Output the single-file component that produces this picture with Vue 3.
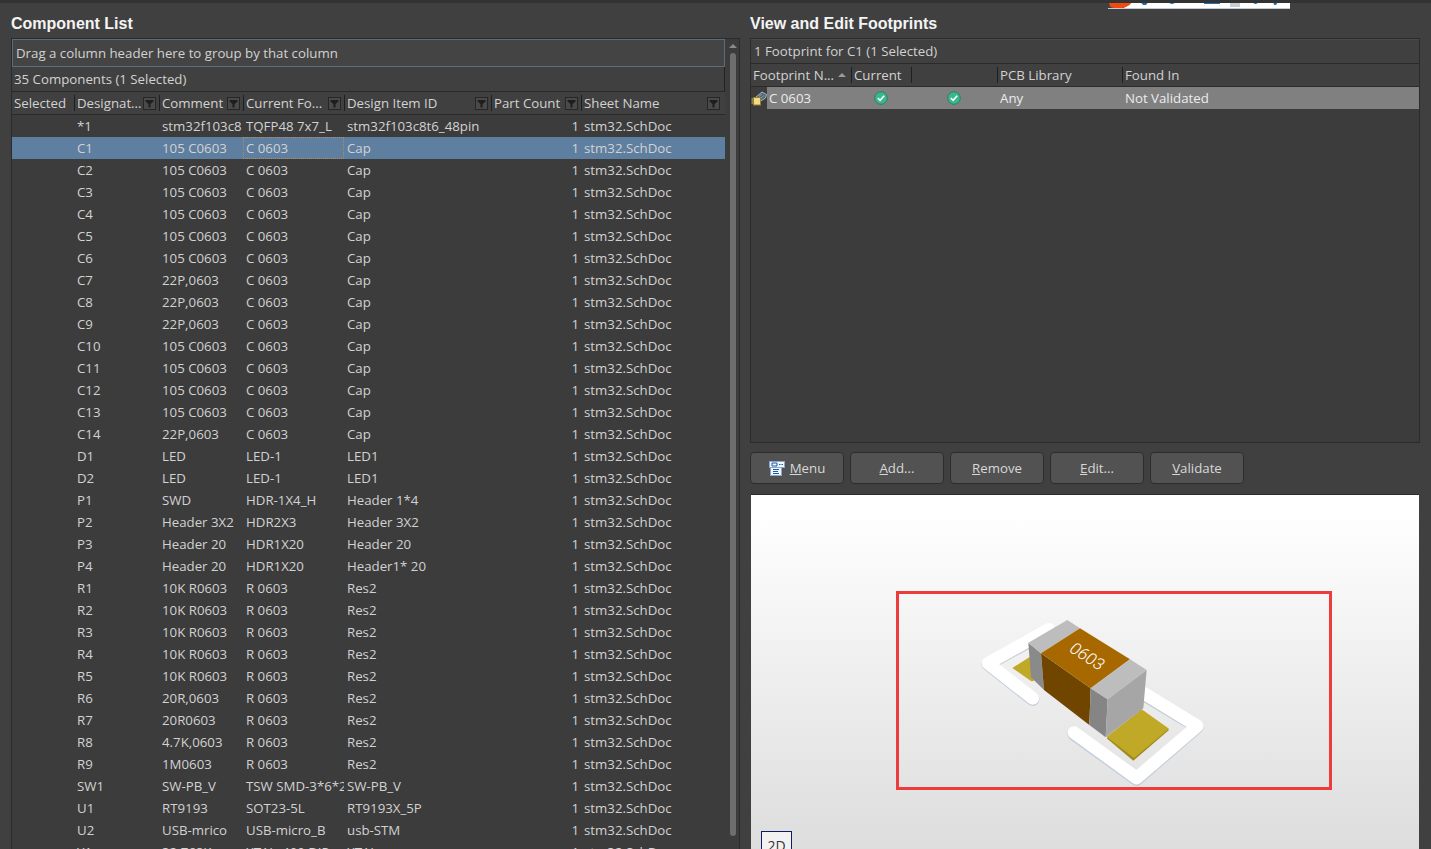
<script setup>
const columns = [
  { label: 'Selected' },
  { label: 'Designat...', filter: true },
  { label: 'Comment', filter: true },
  { label: 'Current Fo...', filter: true },
  { label: 'Design Item ID', filter: true },
  { label: 'Part Count', filter: true },
  { label: 'Sheet Name', filter: true },
]

const parts = [
  ['*1', 'stm32f103c8', 'TQFP48 7x7_L', 'stm32f103c8t6_48pin'],
  ['C1', '105 C0603', 'C 0603', 'Cap'],
  ['C2', '105 C0603', 'C 0603', 'Cap'],
  ['C3', '105 C0603', 'C 0603', 'Cap'],
  ['C4', '105 C0603', 'C 0603', 'Cap'],
  ['C5', '105 C0603', 'C 0603', 'Cap'],
  ['C6', '105 C0603', 'C 0603', 'Cap'],
  ['C7', '22P,0603', 'C 0603', 'Cap'],
  ['C8', '22P,0603', 'C 0603', 'Cap'],
  ['C9', '22P,0603', 'C 0603', 'Cap'],
  ['C10', '105 C0603', 'C 0603', 'Cap'],
  ['C11', '105 C0603', 'C 0603', 'Cap'],
  ['C12', '105 C0603', 'C 0603', 'Cap'],
  ['C13', '105 C0603', 'C 0603', 'Cap'],
  ['C14', '22P,0603', 'C 0603', 'Cap'],
  ['D1', 'LED', 'LED-1', 'LED1'],
  ['D2', 'LED', 'LED-1', 'LED1'],
  ['P1', 'SWD', 'HDR-1X4_H', 'Header 1*4'],
  ['P2', 'Header 3X2', 'HDR2X3', 'Header 3X2'],
  ['P3', 'Header 20', 'HDR1X20', 'Header 20'],
  ['P4', 'Header 20', 'HDR1X20', 'Header1* 20'],
  ['R1', '10K R0603', 'R 0603', 'Res2'],
  ['R2', '10K R0603', 'R 0603', 'Res2'],
  ['R3', '10K R0603', 'R 0603', 'Res2'],
  ['R4', '10K R0603', 'R 0603', 'Res2'],
  ['R5', '10K R0603', 'R 0603', 'Res2'],
  ['R6', '20R,0603', 'R 0603', 'Res2'],
  ['R7', '20R0603', 'R 0603', 'Res2'],
  ['R8', '4.7K,0603', 'R 0603', 'Res2'],
  ['R9', '1M0603', 'R 0603', 'Res2'],
  ['SW1', 'SW-PB_V', 'TSW SMD-3*6*2', 'SW-PB_V'],
  ['U1', 'RT9193', 'SOT23-5L', 'RT9193X_5P'],
  ['U2', 'USB-mrico', 'USB-micro_B', 'usb-STM'],
  ['Y1', '32.768K', 'XTAL_400 DIP', 'XTAL'],
]

const buttons = [
  { key: 'M', rest: 'enu', icon: true },
  { key: 'A', rest: 'dd...' },
  { key: 'R', rest: 'emove' },
  { key: 'E', rest: 'dit...' },
  { key: 'V', rest: 'alidate' },
]
</script>

<template>
  <div class="page">
    <div class="tray">
      <svg width="182" height="8" viewBox="0 0 182 8">
        <path d="M0 0 L2 6 Q3 8 8 8 L14 8 Q22 7 25 0 L19 0 Q15 3 9 3 Q6 3 6 0 Z" fill="#f04a12" />
        <path d="M31 0h3l2 3 3-3h3l-4 5h-3zM60 0h8q-1 4-4 4t-4-4zM83 0h3v2h-3zM96 0h16v4H96z" fill="#1c6fc4" />
        <path d="M122 0h10v7h-10z" fill="#c8cdd3" />
        <path d="M144 0h7q-1 4-3.500 4T144 0zM165 0h6l-3 5h-2z" fill="#1c6fc4" />
      </svg>
    </div>

    <section class="left">
      <h2>Component List</h2>
      <div class="list-box">
        <div class="list-main">
          <div class="group-bar">Drag a column header here to group by that column</div>
          <div class="count-row">35 Components (1 Selected)</div>
          <div class="grid-row head-row">
            <div v-for="col in columns" :key="col.label" class="head-cell">
              <span class="head-label">{{ col.label }}</span>
              <svg v-if="col.filter" class="filter" width="13" height="13" viewBox="0 0 13 13">
                <rect x="0.5" y="0.5" width="12" height="12" fill="#4a4a4a" stroke="#262626" />
                <path d="M2.500 3h8v1.500L7.500 7v3.500h-2V7L2.500 4.500z" fill="#1e1e1e" />
              </svg>
            </div>
          </div>
          <div class="rows">
            <div
              v-for="row in parts"
              :key="row[0]"
              class="grid-row body-row"
              :class="{ selected: row[0] === 'C1' }"
            >
              <div class="cell"></div>
              <div class="cell">{{ row[0] }}</div>
              <div class="cell">{{ row[1] }}</div>
              <div class="cell foot-cell">{{ row[2] }}</div>
              <div class="cell">{{ row[3] }}</div>
              <div class="cell count-cell">1</div>
              <div class="cell">stm32.SchDoc</div>
            </div>
          </div>
        </div>
        <div class="scrollbar">
          <div class="arrow"></div>
          <div class="thumb"></div>
        </div>
      </div>
    </section>

    <section class="right">
      <h2>View and Edit Footprints</h2>
      <div class="foot-box">
        <div class="foot-title">1 Footprint for C1 (1 Selected)</div>
        <div class="foot-grid foot-head">
          <div class="foot-h first">Footprint N...<span class="sort"></span></div>
          <div class="foot-h">Current</div>
          <div class="foot-h"></div>
          <div class="foot-h">PCB Library</div>
          <div class="foot-h">Found In</div>
        </div>
        <div class="foot-grid foot-row">
          <div class="name-cell">
            <svg class="chip" width="16" height="16" viewBox="0 0 16 16">
              <path d="M5 7L11 2L15.500 4.500L14.500 8L9 11.500L5 9z" fill="#4f6678" stroke="#c4d0da" stroke-width="0.8" />
              <path d="M8 6.500L11 4M10 8L13 5.500" stroke="#9fb2c2" stroke-width="0.7" />
              <path d="M0.500 9h2M0.500 11h2M0.500 13h2" stroke="#e2c766" />
              <rect x="2.500" y="7.500" width="7" height="7.500" fill="#f0dc86" stroke="#96802e" />
            </svg>
            <span class="name-text">C 0603</span>
          </div>
          <div class="check-cell">
            <svg width="14" height="14" viewBox="0 0 14 14">
              <circle cx="7" cy="7" r="6.300" fill="#38b98c" stroke="#2b7f62" />
              <path d="M3.800 7l2.300 2.400 4.100-4.600" fill="none" stroke="#fff" stroke-width="1.600" />
            </svg>
          </div>
          <div class="check-cell">
            <svg width="14" height="14" viewBox="0 0 14 14">
              <circle cx="7" cy="7" r="6.300" fill="#38b98c" stroke="#2b7f62" />
              <path d="M3.800 7l2.300 2.400 4.100-4.600" fill="none" stroke="#fff" stroke-width="1.600" />
            </svg>
          </div>
          <div class="text-cell">Any</div>
          <div class="text-cell">Not Validated</div>
        </div>
      </div>

      <div class="buttons">
        <button v-for="b in buttons" :key="b.key" type="button">
          <svg v-if="b.icon" width="16" height="15" viewBox="0 0 16 15">
            <rect x="1.500" y="5.500" width="11" height="9" fill="#f2f6fb" stroke="#86a8d2" />
            <rect x="0.500" y="0.500" width="15" height="6" fill="#f2f6fb" stroke="#86a8d2" />
            <path d="M3 2h5v3H3z" fill="none" stroke="#1f5aa0" />
            <path d="M10 3h1.500v1H10zM12.500 3H14v1h-1.500z" fill="#1f5aa0" />
            <path d="M4 8h6v1H4zM4 10h5v1H4zM4 12h6v1H4z" fill="#1f5aa0" />
          </svg>
          <span><u>{{ b.key }}</u>{{ b.rest }}</span>
        </button>
      </div>

      <div class="preview">
        <svg class="model" width="260" height="200" viewBox="0 0 780 600">
          <g fill="none" stroke-linecap="round" stroke-linejoin="round">
            <path d="M266 92L84 192L218 298" stroke="#c3cfdc" stroke-width="40" />
            <path d="M266 88L84 190L218 295" stroke="#fff" stroke-width="38" />
            <path d="M552 284L712 380L530 538L342 402" stroke="#c3cfdc" stroke-width="40" />
            <path d="M552 280L712 378L530 534L342 398" stroke="#fff" stroke-width="38" />
          </g>
          <path d="M157 204L210 170L222 242L214 244Z" fill="#c1a928" />
          <path d="M440 415L545 330L627 390L520 482Z" fill="#a08b20" />
          <path d="M440 410L545 328L627 386L522 474Z" fill="#c1a928" />
          <path d="M205 128L243 160L252 270L213 232Z" fill="#8a8a8a" />
          <path d="M205 128L322 60L360 85L243 160Z" fill="#bdbdbd" />
          <path d="M243 160L392 265L388 375L252 270Z" fill="#6f4500" />
          <path d="M243 160L360 85L510 178L392 265Z" fill="#a86800" />
          <path d="M392 265L443 298L437 412L388 375Z" fill="#858585" />
          <path d="M392 265L510 178L560 210L443 298Z" fill="#bdbdbd" />
          <path d="M443 298L560 210L550 325L437 412Z" fill="#a6a6a6" />
          <text class="print" x="0" y="0" transform="translate(324 152) rotate(33) skewX(-8)">0603</text>
        </svg>
        <div class="marker"></div>
        <div class="view-2d">2D</div>
      </div>
    </section>
  </div>
</template>

<style>
html,
body {
  height: 849px;
  margin: 0;
  overflow: hidden;
  background: #404040;
}
</style>

<style scoped>
.page {
  position: relative;
  display: flex;
  gap: 10px;
  box-sizing: border-box;
  height: 849px;
  padding-left: 11px;
  overflow: hidden;
  color: #d2d2d2;
  font-family: "Open Sans", "Noto Sans", sans-serif;
  font-size: 13.25px;
  background: #404040;
  border-top: 3px solid #333;
}

.tray {
  position: absolute;
  top: -3px;
  left: 1108px;
  width: 182px;
  height: 8px;
  line-height: 0;
  background: linear-gradient(to right, transparent 16px, #fff 16px);
  border-bottom: 1px solid #c3ccd6;
}

h2 {
  height: 35px;
  margin: 0;
  padding-top: 11px;
  box-sizing: border-box;
  color: #f4f4f4;
  font-family: "Liberation Sans", Arial, sans-serif;
  font-size: 16px;
  font-weight: 700;
  line-height: 19px;
}

.left {
  width: 729px;
  flex: none;
}

.list-box {
  display: flex;
  box-sizing: border-box;
  height: 820px;
  background: #3c3c3c;
  border: 1px solid #2b2b2b;
  border-bottom: 0;
}

.list-main {
  width: 713px;
  flex: none;
}

.group-bar {
  box-sizing: border-box;
  height: 28px;
  padding-left: 3px;
  line-height: 26px;
  background: #444;
  border: 1px solid #5b6b80;
}

.count-row {
  box-sizing: border-box;
  height: 24px;
  padding-left: 2px;
  line-height: 24px;
  background: #404040;
  border-right: 1px solid #222;
  background-clip: padding-box;
}

.grid-row {
  display: grid;
  grid-template-columns: 62px 85px 84px 101px 147px 90px 144px;
}

.head-row {
  box-sizing: border-box;
  height: 24px;
  background: #404040;
  border-top: 1px solid #2a2a2a;
  border-bottom: 1px solid #2a2a2a;
}

.head-cell {
  display: flex;
  align-items: center;
  justify-content: space-between;
  box-sizing: border-box;
  height: 16px;
  margin-top: 3px;
  padding: 0 3px 0 2px;
  border-left: 1px solid #1f1f1f;
}

.head-cell:first-child {
  padding-left: 2px;
  border-left: 0;
}

.head-cell:last-child {
  padding-right: 5px;
}

.head-label {
  white-space: nowrap;
}

.filter {
  flex: none;
}

.body-row {
  height: 22px;
  line-height: 22px;
}

.body-row.selected {
  background: #5f7fa0;
}

.cell {
  box-sizing: border-box;
  padding-left: 3px;
  overflow: hidden;
  white-space: nowrap;
}

.body-row.selected .foot-cell {
  outline: 1px dotted #b08c60;
  outline-offset: -1px;
}

.count-cell {
  padding-right: 2px;
  text-align: right;
}

.scrollbar {
  display: flex;
  flex-direction: column;
  align-items: center;
  width: 14px;
  margin-left: 1px;
  padding-top: 5px;
}

.arrow {
  width: 0;
  height: 0;
  border-right: 4px solid transparent;
  border-bottom: 4px solid #8b8b8b;
  border-left: 4px solid transparent;
}

.thumb {
  width: 6px;
  height: 783px;
  margin-top: 5px;
  background: #6e6e6e;
  border-radius: 3px;
}

.right {
  width: 670px;
  flex: none;
}

.foot-box {
  box-sizing: border-box;
  height: 405px;
  background: #3c3c3c;
  border: 1px solid #2b2b2b;
}

.foot-title {
  box-sizing: border-box;
  height: 24px;
  padding-left: 3px;
  line-height: 23px;
  background: #404040;
  border-top: 1px solid #4a4a4a;
}

.foot-grid {
  display: grid;
  grid-template-columns: 100px 60px 86px 125px 297px;
}

.foot-head {
  box-sizing: border-box;
  height: 24px;
  background: #404040;
  border-top: 1px solid #2a2a2a;
  border-bottom: 1px solid #2a2a2a;
}

.foot-h {
  display: flex;
  align-items: center;
  justify-content: space-between;
  box-sizing: border-box;
  height: 16px;
  margin-top: 3px;
  padding: 0 2px;
  border-left: 1px solid #1f1f1f;
}

.foot-h.first {
  padding: 0 5px 0 2px;
  border-left: 0;
}

.sort {
  width: 0;
  height: 0;
  border-right: 4px solid transparent;
  border-bottom: 4px solid #9a9a9a;
  border-left: 4px solid transparent;
}

.foot-row {
  height: 22px;
  line-height: 22px;
  background: linear-gradient(to right, transparent 16px, #808080 16px);
}

.name-cell {
  display: flex;
  align-items: center;
  gap: 2px;
}

.chip {
  flex: none;
}

.name-text {
  color: #ececec;
}

.check-cell {
  display: flex;
  align-items: center;
  justify-content: center;
  padding-bottom: 1px;
}

.text-cell {
  padding-left: 3px;
  color: #ececec;
}

.buttons {
  display: flex;
  gap: 6px;
  margin-top: 9px;
}

button {
  display: flex;
  align-items: center;
  justify-content: center;
  gap: 5px;
  box-sizing: border-box;
  width: 94px;
  height: 32px;
  padding: 0;
  color: #d8d8d8;
  font: inherit;
  background: #525252;
  border: 1px solid #2d2d2d;
  border-radius: 4px;
}

.preview {
  position: relative;
  width: 668px;
  height: 354px;
  margin: 10px 0 0 1px;
  background: linear-gradient(to bottom, #fff 0, #fff 15px, #dddddd 100%);
  border-top: 1px solid #2b2b2b;
}

.model {
  position: absolute;
  top: 105px;
  left: 209px;
}

.print {
  fill: #fff;
  font-family: Roboto, "Liberation Sans", sans-serif;
  font-size: 50px;
  font-weight: 300;
}

.marker {
  position: absolute;
  top: 96px;
  left: 145px;
  box-sizing: border-box;
  width: 436px;
  height: 199px;
  border: 3px solid #ee3b3b;
}

.view-2d {
  position: absolute;
  top: 336px;
  left: 10px;
  box-sizing: border-box;
  width: 31px;
  height: 30px;
  padding-top: 5px;
  color: #333;
  text-align: center;
  font-size: 14px;
  line-height: 18px;
  background: #f2f2f2;
  border: 1px solid #0c1f66;
}
</style>
